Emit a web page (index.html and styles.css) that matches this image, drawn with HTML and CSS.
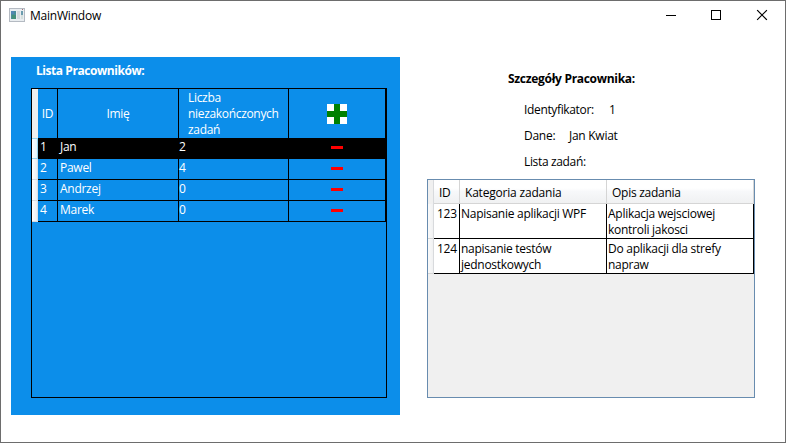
FILE: index.html
```html
<!DOCTYPE html>
<html lang="pl">
<head>
<meta charset="utf-8">
<title>MainWindow</title>
<link rel="stylesheet" href="styles.css">
</head>
<body>
<div class="window">
  <header class="titlebar">
    <svg class="app-icon" width="16" height="14" viewBox="0 0 16 14" shape-rendering="crispEdges">
      <rect width="16" height="14" fill="#b4bac2"/>
      <rect x="1" y="1" width="14" height="12" fill="#e9edf0"/>
      <rect x="2" y="3" width="5" height="8" fill="#4a8d99"/>
      <rect x="2" y="3" width="3" height="3" fill="#5287b3"/>
      <rect x="3" y="7" width="4" height="4" fill="#459078"/>
      <rect x="8" y="3" width="3" height="8" fill="#d3d9dc"/>
      <rect x="12" y="3" width="2" height="4" fill="#6b9cae"/>
      <rect x="12" y="7" width="2" height="4" fill="#d5dfdd"/>
      <rect x="13" y="1" width="1" height="1" fill="#a36e76"/>
    </svg>
    <span class="title">MainWindow</span>
    <div class="controls">
      <svg width="46" height="28" viewBox="0 0 46 28" shape-rendering="crispEdges"><path d="M18 14.5h10" stroke="#000"/></svg>
      <svg width="46" height="28" viewBox="0 0 46 28" shape-rendering="crispEdges"><path d="M17.5 9.5h9v9h-9z" stroke="#000" fill="none"/></svg>
      <svg width="46" height="28" viewBox="0 0 46 28"><path d="M17.5 9.5l9 9M26.5 9.5l-9 9" stroke="#000" stroke-width="1.1" stroke-linecap="square"/></svg>
    </div>
  </header>
  <main class="content">
    <section class="workers">
      <h2 class="workers-title">Lista Pracowników:</h2>
      <div class="workers-box">
        <div class="wrow whead">
          <i class="rh"></i><div class="c-id">ID</div><div class="c-name">Imię</div><div class="c-count">Liczba<br>niezakończonych<br>zadań</div>
          <div class="c-act"><svg width="20" height="20" shape-rendering="crispEdges"><rect width="20" height="20" fill="#fff"/><path d="M7 0h6v7h7v6h-7v7H7v-7H0V7h7z" fill="#008000"/></svg></div>
        </div>
        <div class="wrow selected"><i class="rh"></i><div>1</div><div>Jan</div><div>2</div><div class="c-act"><b class="minus"></b></div></div>
        <div class="wrow"><i class="rh"></i><div>2</div><div>Pawel</div><div>4</div><div class="c-act"><b class="minus"></b></div></div>
        <div class="wrow"><i class="rh"></i><div>3</div><div>Andrzej</div><div>0</div><div class="c-act"><b class="minus"></b></div></div>
        <div class="wrow"><i class="rh"></i><div>4</div><div>Marek</div><div>0</div><div class="c-act"><b class="minus"></b></div></div>
      </div>
    </section>
    <section class="details">
      <h2 class="details-title">Szczegóły Pracownika:</h2>
      <div class="field"><span class="f-id">Identyfikator:</span><span>1</span></div>
      <div class="field"><span class="f-name">Dane:</span><span class="f-value">Jan Kwiat</span></div>
      <div class="field"><span class="f-list">Lista zadań:</span></div>
      <div class="tasks">
        <div class="trow thead"><i class="rh"></i><div>ID</div><div class="h-cat">Kategoria zadania</div><div>Opis zadania</div></div>
        <div class="trow"><i class="rh"></i><div>123</div><div>Napisanie aplikacji WPF</div><div>Aplikacja wejsciowej<br>kontroli jakosci</div></div>
        <div class="trow"><i class="rh"></i><div>124</div><div>napisanie testów<br>jednostkowych</div><div>Do aplikacji dla strefy<br>napraw</div></div>
      </div>
    </section>
  </main>
</div>
</body>
</html>
```
FILE: styles.css
```css
* { box-sizing: border-box; }
body {
  margin: 0;
  font: 12px/16px "Segoe UI", "Open Sans", "Noto Sans", sans-serif;
  letter-spacing: -0.27px;
  color: #000;
  white-space: nowrap;
}
.window { width: 786px; height: 443px; border: 1px solid #6d6d6d; background: #fff; overflow: hidden; }
.titlebar { display: flex; height: 28px; align-items: center; padding-left: 8px; }
.title { margin-left: 5px; padding-top: 2px; letter-spacing: -0.22px; }
.app-icon { display: block; }
.controls { display: flex; margin-left: auto; margin-right: -1px; }
.content { display: flex; padding: 28px 0 0 10px; }

.workers { width: 389px; height: 358px; padding: 6px 13px 0 20px; background: #0c8eea; color: #fff; }
h2 { margin: 0; font-size: 12px; line-height: 16px; font-weight: 700; }
.workers-title { padding-left: 5px; height: 25px; letter-spacing: -0.44px; }
.workers-box { width: 356px; height: 310px; border: 1px solid #000; }
.wrow { display: grid; grid-template-columns: 6px 20px 121px 110px 97px; height: 21px; }
.wrow > div { border-right: 1px solid #000; border-bottom: 1px solid #000; padding: 1px 0 0 2px; }
.wrow > div:nth-child(4) { padding-left: 0; }
.wrow .rh { background: linear-gradient(90deg, #fff, #eceef1); border-bottom: 1px solid #d7dce0; border-right: 1px solid #dde0e4; }
.wrow.selected > div { background: #000; }
.wrow.selected .rh { background: linear-gradient(90deg, #fff, #e2f4fc); border: 1px solid #98d6ef; border-left: 0; }
.wrow .c-act { display: flex; align-items: center; justify-content: center; padding: 0; }
.wrow.whead { height: 49px; }
.whead .rh { background: #f0f0f0; border: 0; }
.wrow .c-id, .wrow .c-name { display: flex; align-items: center; justify-content: center; padding: 1px 0 0; }
.wrow > .c-count:nth-child(4) { padding: 1px 0 0 9px; letter-spacing: -0.32px; }
.minus { width: 12px; height: 3px; margin-top: -1px; background: #f00; }

.details { width: 328px; margin-left: 27px; padding-top: 14px; }
.details-title { padding-left: 81px; height: 31px; letter-spacing: -0.3px; }
.field { display: flex; height: 26px; padding-left: 97px; }
.f-id { width: 85px; letter-spacing: -0.35px; }
.f-name { width: 45px; }
.f-list { letter-spacing: -0.35px; }
.tasks { height: 219px; margin-top: -1px; border: 1px solid #688caf; background: #f0f0f0; }
.trow { display: grid; grid-template-columns: 6px 26px 147px 147px; height: 35px; }
.trow > div { background: #fff; border-right: 1px solid #000; border-bottom: 1px solid #000; padding: 2px 0 0 1px; }
.trow > div:nth-child(2) { padding-left: 3px; }
.trow .rh { background: linear-gradient(90deg, #fafafa, #f0f1f2); border-right: 1px solid #d8dadd; border-bottom: 1px solid #d5d5d5; }
.trow.thead { height: 24px; }
.thead .rh { background: #f0f0f0; border-bottom: 0; }
.trow.thead > div { padding: 5px 0 0 5px; background: linear-gradient(#fff 0 35%, #f7f8fa 50%, #f0f1f2); border-color: #d5d5d5; }
.trow.thead > .h-cat { letter-spacing: -0.2px; }
```
